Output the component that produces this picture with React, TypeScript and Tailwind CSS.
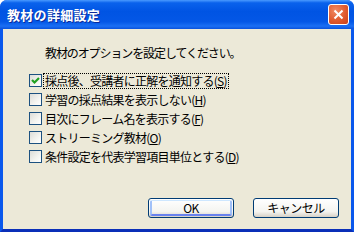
const options = [
  { label: "採点後、受講者に正解を通知する", key: "S", checked: true },
  { label: "学習の採点結果を表示しない", key: "H", checked: false },
  { label: "目次にフレーム名を表示する", key: "F", checked: false },
  { label: "ストリーミング教材", key: "O", checked: false },
  { label: "条件設定を代表学習項目単位とする", key: "D", checked: false },
];

function Checkbox({ checked }: { checked: boolean }) {
  return (
    <div className="w-[13px] h-[13px] shrink-0 border border-[#1c5180] bg-[linear-gradient(135deg,#dcdcd7_0%,#f4f4f0_60%,#ffffff_100%)] flex items-center justify-center">
      {checked && (
        <svg width="9" height="9" viewBox="0 0 9 9">
          <path d="M1 4 L3.5 6.5 L8 2" fill="none" stroke="#21a121" strokeWidth="2.2" />
        </svg>
      )}
    </div>
  );
}

function XpButton({ children, isDefault }: { children: React.ReactNode; isDefault?: boolean }) {
  return (
    <div className="w-[86px] h-[20px] rounded-[3px] border border-[#003c74] bg-[linear-gradient(to_bottom,#ffffff_0%,#f4f4f0_70%,#d6d0c5_100%)] p-[1px]">
      <div
        className={
          isDefault
            ? "h-full rounded-[2px] border-x-2 border-t border-b-2 border-t-[#cee7ff] border-x-[#a0c0f8] border-b-[#6982ee] flex items-center justify-center"
            : "h-full flex items-center justify-center"
        }
      >
        <span className="text-[12px] leading-none text-black tracking-[-0.5px]">{children}</span>
      </div>
    </div>
  );
}

export default function App() {
  return (
    <div className="w-[354px] h-[232px] flex flex-col font-['Noto_Sans_CJK_JP',sans-serif] rounded-t-[7px] overflow-hidden bg-[#0a4bdc]">
      {/* Title bar */}
      <div className="h-[29px] shrink-0 flex items-center justify-between pl-[7px] pr-[5px] bg-[linear-gradient(to_bottom,#4a9aff_0%,#0a62ec_10%,#0054e3_40%,#0457e6_75%,#1b6ff4_90%,#0a52dc_100%)]">
        <span className="text-[13px] font-bold text-white leading-none tracking-[0.3px] [text-shadow:1px_1px_0_#0b2a9a]">
          教材の詳細設定
        </span>
        <div className="w-[21px] h-[21px] rounded-[3px] border border-white bg-[radial-gradient(circle_at_35%_30%,#f08a64_0%,#e05a2e_55%,#c9401a_100%)] flex items-center justify-center">
          <svg width="11" height="11" viewBox="0 0 11 11">
            <path d="M1.5 1.5 L9.5 9.5 M9.5 1.5 L1.5 9.5" stroke="#ffffff" strokeWidth="2" />
          </svg>
        </div>
      </div>

      {/* Body */}
      <div className="flex-1 flex flex-col border-x-[3px] border-b-[3px] border-x-[#0a58ec] border-b-[#0a2fb8] bg-[#ece9d8] text-black">
        <p className="pl-[42px] pt-[17px] text-[12px] leading-[14px] tracking-[-1.1px]">教材のオプションを設定してください。</p>

        <div className="mt-[11px] pl-[26px] flex flex-col">
          {options.map((o, i) => (
            <div key={o.key} className="h-[19px] flex items-center gap-[3px]">
              <Checkbox checked={o.checked} />
              <span
                className={
                  i === 0
                    ? "text-[12px] leading-[14px] tracking-[-0.75px] outline-1 outline-dotted outline-black px-[1px] -ml-[1px]"
                    : "text-[12px] leading-[14px] tracking-[-0.75px]"
                }
              >
                {o.label}(<span className="underline">{o.key}</span>)
              </span>
            </div>
          ))}
        </div>

        <div className="mt-auto mb-[11px] pr-[12px] flex justify-end gap-[19px]">
          <XpButton isDefault>OK</XpButton>
          <XpButton>キャンセル</XpButton>
        </div>
      </div>
    </div>
  );
}
